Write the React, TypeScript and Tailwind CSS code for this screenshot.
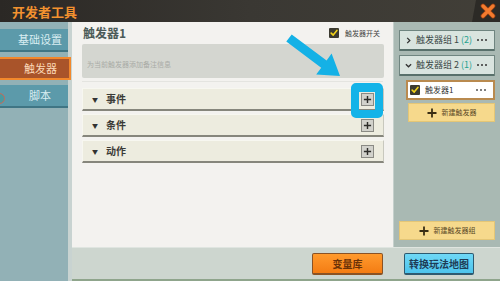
import React from "react";

const cjk = { fontFamily: '"Noto Sans CJK SC", "Noto Sans", sans-serif' };

function Check({ size = 10 }: { size?: number }) {
  return (
    <span
      className="inline-flex items-center justify-center bg-[#3b3a30] rounded-[1px] shrink-0"
      style={{ width: size, height: size }}
    >
      <svg viewBox="0 0 10 10" width={size - 2} height={size - 2}>
        <path d="M1.5 5.2 L4 7.6 L8.6 1.8" fill="none" stroke="#f2d21a" strokeWidth="2" strokeLinecap="round" strokeLinejoin="round" />
      </svg>
    </span>
  );
}

function PlusBox() {
  return (
    <span className="w-[13px] h-[13px] bg-[#d2d2cc] border border-[#8a8a84] flex items-center justify-center">
      <svg viewBox="0 0 10 10" width="9" height="9">
        <path d="M5 1 V9 M1 5 H9" stroke="#2d2d2a" strokeWidth="1.6" />
      </svg>
    </span>
  );
}

function Section({ label }: { label: string }) {
  return (
    <div className="h-[23px] bg-[#edecdf] border-t border-l border-[#f7f7f0] border-b-[2px] border-b-[#86867c] border-r border-r-[#c8c8be] flex items-center pl-[9px] pr-[9px]">
      <span className="text-[6px] text-[#333] w-[14px]">▼</span>
      <span className="text-[10px] font-bold text-[#3a3a36] leading-none">{label}</span>
      <span className="ml-auto">
        <PlusBox />
      </span>
    </div>
  );
}

function NavItem({ label, active }: { label: string; active?: boolean }) {
  return active ? (
    <div className="w-[71px] h-[23px] bg-[#a9542a] border-[2px] border-[#f2882c] border-l-0 flex items-center justify-center pl-[12px] text-[11px] text-[#fbd9b8] relative z-10">
      {label}
    </div>
  ) : (
    <div className="w-[68px] h-[23px] bg-[#5c9aaa] border-b-[2px] border-[#3f7584] flex items-center justify-center pl-[12px] text-[11px] text-[#d9eef2]">
      {label}
    </div>
  );
}

function Dots({ color = "#333" }: { color?: string }) {
  return (
    <span className="ml-auto flex gap-[2px]">
      <span className="w-[2px] h-[2px] rounded-full" style={{ background: color }} />
      <span className="w-[2px] h-[2px] rounded-full" style={{ background: color }} />
      <span className="w-[2px] h-[2px] rounded-full" style={{ background: color }} />
    </span>
  );
}

function GroupRow({ open, name, count }: { open?: boolean; name: string; count: string }) {
  return (
    <div className="h-[21px] bg-[#d9e4df] border border-[#6f8580] border-b-[2px] border-b-[#58706b] rounded-[1px] flex items-center pl-[5px] pr-[7px]">
      <svg viewBox="0 0 8 8" width="7" height="7" className="mr-[4px]">
        <path d={open ? "M1 2.5 L4 5.5 L7 2.5" : "M2.5 1 L5.5 4 L2.5 7"} fill="none" stroke="#333" strokeWidth="1.5" />
      </svg>
      <span className="text-[9px] text-[#3a4846]">
        {name} <span className="text-[#23a18d]">{count}</span>
      </span>
      <Dots />
    </div>
  );
}

function YellowButton({ label, className }: { label: string; className: string }) {
  return (
    <div className={`h-[19px] bg-[#f6d98c] border border-[#e4c676] flex items-center justify-center gap-[5px] ${className}`}>
      <svg viewBox="0 0 10 10" width="10" height="10">
        <path d="M5 0.5 V9.5 M0.5 5 H9.5" stroke="#3a2e14" strokeWidth="1.8" />
      </svg>
      <span className="text-[7px] text-[#5a4a26]">{label}</span>
    </div>
  );
}

export default function App() {
  return (
    <div className="relative w-[500px] h-[281px] flex flex-col overflow-hidden bg-[#92b1b6]" style={cjk}>
      {/* Title bar */}
      <div className="h-[22px] shrink-0 flex items-center bg-gradient-to-r from-[#2b2825] via-[#3a3833] to-[#423f38] relative">
        <span className="pl-[12px] text-[13px] font-bold text-[#f3922f] leading-none">开发者工具</span>
        <div className="ml-auto h-full w-[28px] bg-[#2c2a26] flex items-center justify-center [clip-path:polygon(4px_0,100%_0,100%_100%,0_100%)]">
          <svg viewBox="0 0 16 16" width="16" height="16" className="ml-[4px]">
            <path d="M3 3 L13 13 M13 3 L3 13" stroke="#8a3a12" strokeWidth="4.8" strokeLinecap="round" />
            <path d="M3 3 L13 13 M13 3 L3 13" stroke="#f47b2e" strokeWidth="3.4" strokeLinecap="round" />
          </svg>
        </div>
      </div>

      {/* Body */}
      <div className="flex-1 flex min-h-0">
        {/* Sidebar */}
        <div className="w-[68px] shrink-0 flex flex-col gap-[5px] pt-[7px] relative">
          <NavItem label="基础设置" />
          <NavItem label="触发器" active />
          <NavItem label="脚本" />
          <span className="absolute left-[-6px] top-[71px] w-[11px] h-[11px] rounded-full bg-[#4a9aa0] border border-[#c86a5a]" />
        </div>
        <div className="w-[4px] shrink-0 bg-[#c8d3d1]" />

        {/* Content */}
        <div className="flex-1 flex flex-col min-w-0">
          <div className="flex-1 flex min-h-0">
            {/* Main panel */}
            <div className="w-[321px] shrink-0 bg-[#f3f2ef] flex flex-col px-[10px]">
              <div className="h-[22px] flex items-center">
                <span className="text-[12px] font-bold text-[#4b5a57] pl-[1px] leading-none">触发器1</span>
                <span className="ml-auto flex items-center gap-[6px] pr-[3px]">
                  <Check size={10} />
                  <span className="text-[7px] text-[#444]">触发器开关</span>
                </span>
              </div>
              <div className="h-[34px] w-[302px] bg-[#d4d6d0] rounded-[2px] px-[5px] pt-[4px]">
                <span className="text-[7px] text-[#a9aba6]">为当前触发器添加备注信息</span>
              </div>
              <div className="h-[7px] border-t border-[#e4e4e0] mt-[3px]" />
              <div className="flex flex-col gap-[3px] w-[302px]">
                <Section label="事件" />
                <Section label="条件" />
                <Section label="动作" />
              </div>
            </div>

            {/* Right panel */}
            <div className="flex-1 bg-[#a9b9b3] flex flex-col pt-[8px] pl-[5px] pr-[5px] pb-[7px] border-l border-[#c5d0cc]">
              <div className="flex flex-col gap-[4px]">
                <GroupRow name="触发器组 1" count="(2)" />
                <GroupRow open name="触发器组 2" count="(1)" />
              </div>
              <div className="ml-[7px] mt-[4px] h-[20px] bg-white border-[2px] border-[#b98a4f] flex items-center pl-[2px] pr-[7px] gap-[5px]">
                <Check size={10} />
                <span className="text-[8px] text-[#333]">触发器1</span>
                <Dots color="#555" />
              </div>
              <YellowButton label="新建触发器" className="ml-[9px] mt-[3px]" />
              <YellowButton label="新建触发器组" className="mt-auto" />
            </div>
          </div>

          {/* Bottom bar */}
          <div className="h-[34px] shrink-0 bg-[#cdd6cf] border-t border-[#dfe5e0] flex items-center justify-end gap-[21px] pr-[26px] border-b-[2px] border-b-[#8fa58c]">
            <div className="w-[71px] h-[22px] bg-gradient-to-b from-[#ff9a2c] to-[#f47c12] border border-[#8a5224] border-b-[2px] rounded-[2px] flex items-center justify-center text-[10px] font-bold text-[#6a3208]">
              变量库
            </div>
            <div className="w-[70px] h-[22px] bg-gradient-to-b from-[#6fd8f6] to-[#4cc4ec] border border-[#2d5a70] border-b-[2px] rounded-[2px] flex items-center justify-center text-[10px] font-bold text-[#1e3c56]">
              转换玩法地图
            </div>
          </div>
        </div>
      </div>

      {/* Tutorial highlight over the first plus button */}
      <div className="absolute left-[351px] top-[83px] w-[32px] h-[35px] border-[8px] border-t-[9px] border-[#13b3e8] rounded-[5px]" />
      <svg className="absolute left-0 top-0 pointer-events-none" width="500" height="281">
        <polygon
          points="286.3,41.6 321.2,67.7 316.2,74.6 340,76 331.6,53.6 326.6,60.5 291.7,34.4"
          fill="#14b1e6"
          strokeLinejoin="round"
        />
      </svg>
    </div>
  );
}
